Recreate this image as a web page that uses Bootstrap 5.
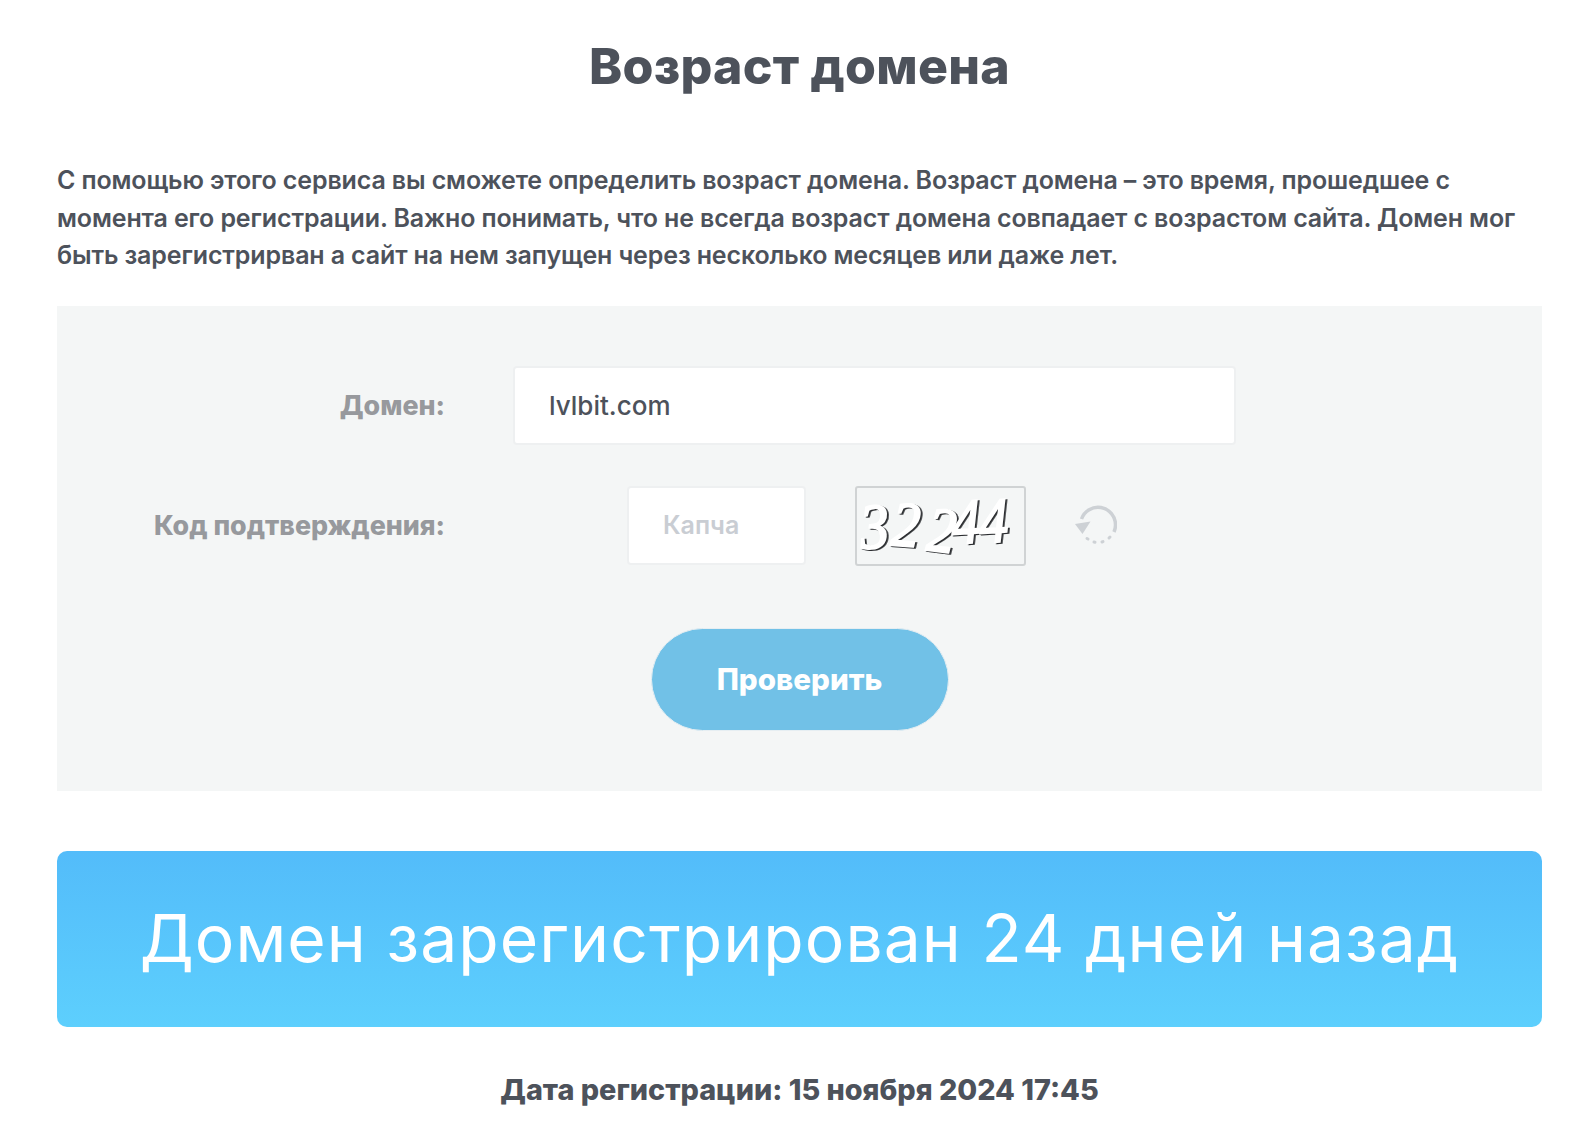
<!doctype html>
<html lang="ru"><head><meta charset="utf-8"><title>Возраст домена</title>
<link href="https://cdn.jsdelivr.net/npm/bootstrap@5.3.0/dist/css/bootstrap.min.css" rel="stylesheet">
<style>
body{background:#fff;color:#4d525b;font-family:"Inter","Liberation Sans",sans-serif;}
.page-wrap{padding:0 52px 0 57px;}
.page-title{font-weight:800;font-size:50px;line-height:56px;letter-spacing:.25px;color:#4d525b;padding-top:38px;margin:0 0 68px;text-align:center;}
.intro{font-size:25px;line-height:37.5px;font-weight:600;margin:0 0 31px;letter-spacing:-.13px;}
.form-panel{background:#f4f6f6;height:485px;padding-top:60px;}
.row-gap{margin-bottom:41px;}
.lbl{width:388px;text-align:right;font-weight:800;font-size:26.8px;color:#97999d;margin:0;}
.field{border:2px solid #eef0f1;border-radius:4px;background:#fff;height:79px;font-size:26px;font-weight:500;color:#4d525b;padding:0 34px;box-shadow:none;}
.field-domain{width:723px;margin-left:68px;}
.field-captcha{width:179px;margin-left:182px;}
.field-captcha::placeholder{color:#c9cdd3;font-weight:600;}
.field-captcha{font-size:25px;}
.captcha-box{width:171px;height:80px;border:2px solid #d0d3d4;border-radius:3px;margin:0 0 -1px 49px;flex:none;}
.captcha-svg{overflow:visible;display:block;}
.captcha-digits{font-family:"Liberation Serif",serif;font-style:italic;font-size:64px;fill:#fff;stroke:#fff;stroke-width:2px;filter:drop-shadow(2.5px 1px 0 #2b2d30);}
.reload{margin-left:49px;flex:none;}
.btn-row{margin-top:63px;}
.go-btn{width:298px;height:103px;border-radius:52px;background:#71c1e7;border:1px solid #e6eef2;color:#fff;font-weight:800;font-size:29.6px;}
.go-btn:hover{background:#71c1e7;color:#fff;}
.result{height:176px;margin-top:60px;border-radius:10px;background:linear-gradient(#53bcfa,#5dcffd);color:#fff;font-size:66px;font-weight:400;letter-spacing:1.05px;white-space:nowrap;}
.reg-date{font-size:28.8px;font-weight:800;margin:44px 0 0;line-height:38px;text-align:center;}
</style></head><body>
<div class="page-wrap">
<h1 class="page-title">Возраст домена</h1>
<p class="intro">С помощью этого сервиса вы сможете определить возраст домена. Возраст домена – это время, прошедшее с момента его регистрации. Важно понимать, что не всегда возраст домена совпадает с возрастом сайта. Домен мог быть зарегистрирван а сайт на нем запущен через несколько месяцев или даже лет.</p>
<form class="form-panel">
<div class="d-flex align-items-center row-gap">
<label class="lbl" for="dm">Домен:</label>
<input id="dm" class="form-control field field-domain" value="lvlbit.com">
</div>
<div class="d-flex align-items-center">
<label class="lbl" for="cp">Код подтверждения:</label>
<input id="cp" class="form-control field field-captcha" placeholder="Капча">
<div class="captcha-box">
<svg class="captcha-svg" width="167" height="76" viewBox="0 0 167 76">
<text class="captcha-digits" transform="scale(.9 1)" x="5 37 76 106 137" y="61 57 62 56 55" rotate="-4 4 6 -3 -3">32244</text>
</svg>
</div>
<svg class="reload" width="42" height="40" viewBox="0 0 42 40" fill="none" stroke="#cdd1d5" stroke-width="3.5">
<path d="M6.5 14A17.5 17.5 0 0 1 40.5 20A17.5 17.5 0 0 1 39 27"/>
<path d="M12 33.5L13 34M19 37L20 37.2M27 37L28 36.6M34 33L35 32" stroke-width="3" stroke-linecap="round"/>
<path d="M0 19L15.5 16.5L7.5 29Z" fill="#cdd1d5" stroke="none"/>
</svg>
</div>
<div class="text-center btn-row"><button type="button" class="btn go-btn">Проверить</button></div>
</form>
<div class="result d-flex align-items-center justify-content-center">Домен зарегистрирован 24 дней назад</div>
<p class="reg-date">Дата регистрации: 15 ноября 2024 17:45</p>
</div>
<script src="https://cdn.jsdelivr.net/npm/bootstrap@5.3.0/dist/js/bootstrap.bundle.min.js"></script>
</body></html>
